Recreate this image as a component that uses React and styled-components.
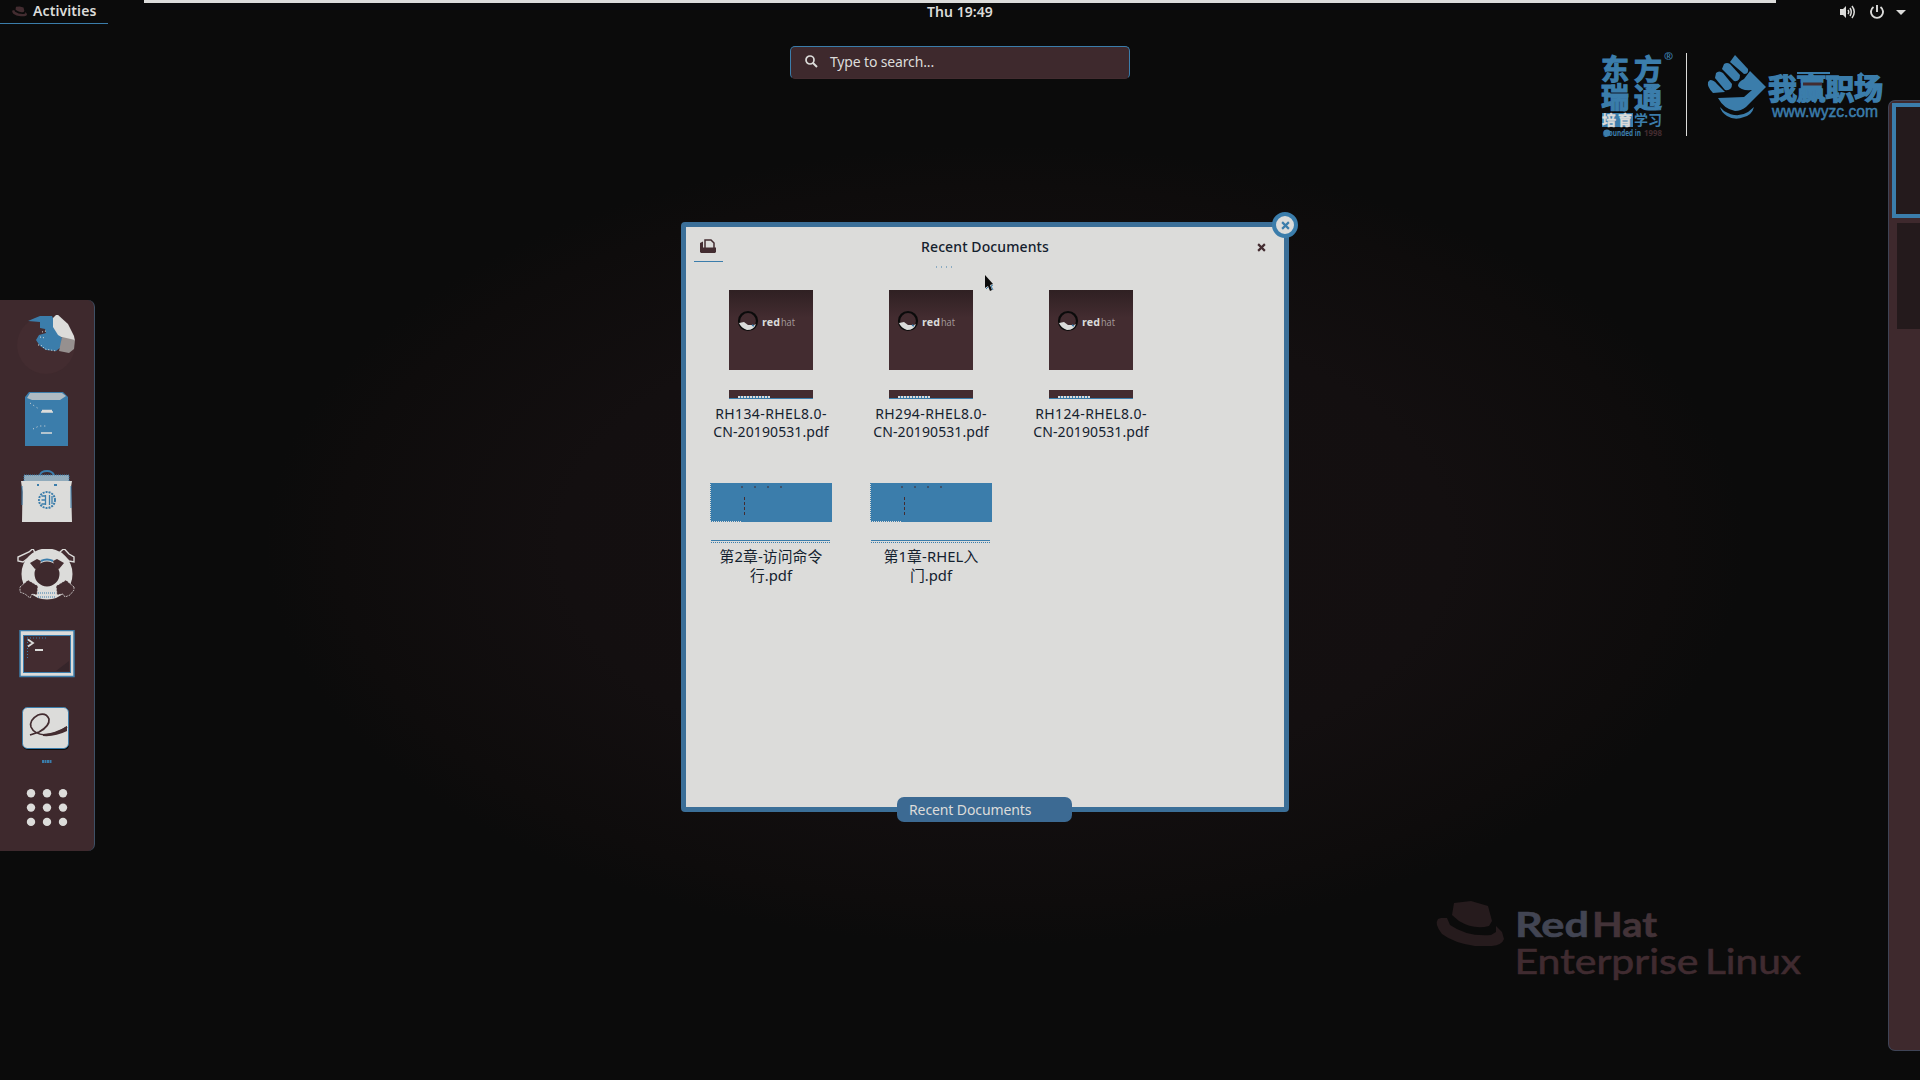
import React from "react";
import styled, { createGlobalStyle } from "styled-components";

const ink = "#0b0b0b";
const maroon = "#432c30";
const blue = "#3b7dab";
const paper = "#dcdcda";
const uiFont = '"Noto Sans", "Noto Sans CJK SC", sans-serif';

const Global = createGlobalStyle`
  html, body { margin: 0; background: ${ink}; overflow: hidden; }
  * { box-sizing: border-box; }
`;

const Desktop = styled.div`
  position: relative;
  width: 1920px;
  height: 1080px;
  overflow: hidden;
  display: flex;
  flex-direction: column;
  font-family: ${uiFont};
  color: ${paper};
  background: radial-gradient(ellipse 740px 400px at 1005px 545px, #161011 0%, #130f10 60%, #0e0c0c 90%, ${ink} 100%);
`;

const TopBar = styled.header`
  height: 24px;
  flex: none;
  display: grid;
  grid-template-columns: 1fr auto 1fr;
  align-items: center;
  font-size: 14px;
  font-weight: 600;
  line-height: 22px;
  background: linear-gradient(${paper}, ${paper}) 144px 0 / 1632px 3px no-repeat;
`;

const Activities = styled.div`
  width: 108px;
  height: 24px;
  padding: 0 0 1px 12px;
  display: flex;
  align-items: center;
  gap: 6px;
  border-bottom: 1px solid ${blue};
  letter-spacing: 0.1px;
`;

const Clock = styled.div`
  padding-bottom: 1px;
  letter-spacing: 0.05px;
`;

const Status = styled.div`
  display: flex;
  justify-content: flex-end;
  align-items: center;
  gap: 12px;
  padding-right: 14px;
`;

const Body = styled.div`
  flex: 1;
  display: grid;
  grid-template-columns: 1fr 340px 1fr;
  align-items: start;
`;

const Dock = styled.nav`
  width: 95px;
  height: 551px;
  margin-top: 276px;
  padding: 15px 0 0 15px;
  display: flex;
  flex-direction: column;
  background: #3e292d;
  border-right: 1px solid #3f5166;
  border-radius: 0 7px 7px 0;
`;

const DockItem = styled.div`
  width: 62px;
  height: ${(p) => p.$h}px;
  display: flex;
  svg { display: block; }
`;

const SearchBox = styled.div`
  width: 340px;
  height: 33px;
  margin-top: 22px;
  padding: 0 14px 2px;
  display: flex;
  align-items: center;
  gap: 12px;
  border: 1px solid ${maroon};
  border-top-color: ${blue};
  border-left-color: ${blue};
  border-right-color: ${blue};
  border-radius: 5px;
  background: #3e292d;
  font-size: 14px;
  line-height: 20px;
  letter-spacing: -0.15px;
`;

const Workspaces = styled.aside`
  justify-self: end;
  width: 32px;
  height: 951px;
  margin-top: 76px;
  padding: 2px 0 0 3px;
  display: flex;
  flex-direction: column;
  gap: 5px;
  border: 1px solid #3f4456;
  border-right: 0;
  border-radius: 7px 0 0 7px;
  background: #3e292d;
`;

const WorkspaceThumb = styled.div`
  height: ${(p) => (p.$active ? 115 : 106)}px;
  margin-left: ${(p) => (p.$active ? 0 : 5)}px;
  border: ${(p) => (p.$active ? `4px solid ${blue}` : "0")};
  border-right: 0;
  background: #241a1c;
`;

const Window = styled.section`
  position: absolute;
  left: 681px;
  top: 222px;
  width: 608px;
  height: 590px;
  border: 5px solid #3b6f98;
  border-radius: 4px;
  background: ${paper};
  color: #14212e;
`;

const TitleBar = styled.div`
  height: 40px;
  padding-bottom: 2px;
  display: grid;
  grid-template-columns: 45px 1fr 45px;
  align-items: center;
  font-size: 14px;
  font-weight: 500;
  letter-spacing: 0.1px;
  text-align: center;
`;

const Tab = styled.div`
  width: 29px;
  height: 35px;
  margin-left: 8px;
  align-self: start;
  display: flex;
  justify-content: center;
  padding: 12px 1px 0 0;
  border-bottom: 1px solid ${blue};
`;

const Grid = styled.div`
  padding: 23px 0 0 5px;
  display: grid;
  grid-template-columns: repeat(3, 160px);
  grid-template-rows: 192px 140px;
`;

const Card = styled.figure`
  margin: 0;
  display: flex;
  flex-direction: column;
  align-items: center;
  text-align: center;
`;

const Cover = styled.div`
  width: 84px;
  height: 80px;
  display: flex;
  padding: 20px 0 0 8px;
  background: linear-gradient(#2f2022, ${maroon} 28px);
`;

const CoverFoot = styled.div`
  width: 84px;
  height: 9px;
  margin: 20px 0 6px;
  padding: 6px 0 0 9px;
  background: ${maroon};
  border-bottom: 1px solid ${blue};
`;

const FootMark = styled.div`
  width: 32px;
  height: 2px;
  background: repeating-linear-gradient(90deg, ${paper} 0 2px, ${blue} 2px 3px);
`;

const Slide = styled.div`
  width: 122px;
  height: 39px;
  margin-top: 1px;
  background: ${blue};
  display: flex;
`;

const SlideRule = styled.div`
  width: 119px;
  height: 3px;
  margin: 18px 2px 4px 0;
  border-top: 1px solid ${blue};
  border-bottom: 1px dotted ${blue};
`;

const Name = styled.figcaption`
  display: flex;
  flex-direction: column;
  align-items: center;
  font-size: ${(p) => (p.$cjk ? 14.8 : 14)}px;
  line-height: ${(p) => (p.$cjk ? 19 : 18)}px;
`;

const NameLine = styled.span`
  letter-spacing: ${(p) => p.$track}px;
`;

const CloseBadge = styled.button`
  position: absolute;
  left: 586px;
  top: -15px;
  width: 26px;
  height: 26px;
  padding: 0;
  display: flex;
  align-items: center;
  justify-content: center;
  border: 4px solid ${blue};
  border-radius: 50%;
  background: ${paper};
`;

const Caption = styled.div`
  position: absolute;
  left: 211px;
  top: 570px;
  width: 175px;
  height: 25px;
  padding-left: 12px;
  border-radius: 7px;
  background: #3c6a93;
  color: ${paper};
  font-size: 14px;
  line-height: 25px;
  letter-spacing: -0.1px;
`;

const Pointer = styled.svg`
  position: absolute;
  left: 984px;
  top: 275px;
`;

const Dots = styled.svg`
  position: absolute;
  left: 250px;
  top: 39px;
`;

const Brand = styled.div`
  position: absolute;
  left: ${(p) => p.$x}px;
  top: ${(p) => p.$y}px;
  svg { display: block; overflow: visible; }
`;

const HatShape = ({ fill }) => (
  <g fill={fill}>
    <path d="M18 2 L35 0 L52 5 L56 20 L53 25 Q38 29 23 20 L16 14 Z" />
    <path d="M5 17 L11 17 L14 24 Q31 36 55 34 L60 31 L60 25 L66 31 L68 38 Q66 44 56 45 L39 45 Q18 42 6 33 Q-2 23 2 18 Z" />
  </g>
);

const Firefox = () => (
  <svg width="62" height="60" viewBox="0 0 62 60">
    <circle cx="31" cy="30" r="29" fill={maroon} />
    <path d="M13 6 L20 3 L25 1 H37 L40 8 L43 18 L47 23 L46 32 L41 36 L31 35 L25 31 L21 25 L24 20 L31 18 L30 14 L25 13 L25 7 Z" fill={blue} />
    <path d="M38 3 L42 -1 L53 9 L59 21 L60 26 L54 25 L48 23 L43 20 L38 12 Z" fill={paper} />
    <path d="M47 22 L60 25 L59 34 L54 38 L44 36 Z" fill="#96908f" />
    <path d="M23 30 l3 0 l4 4 l11 2 M25 22 l5 1 M27 17 l4 -1" stroke={paper} fill="none" strokeDasharray="1 2" />
  </svg>
);

const Files = () => (
  <svg width="62" height="60" viewBox="0 0 62 60">
    <path d="M14 0 H48 L53 5 V54 H10 V5 Z" fill={blue} />
    <path d="M15 1 H47 L51 4 L45 8 H17 L12 6 Z" fill="#aebbc3" />
    <path d="M26 20 H38 M27 18.500 H37 M26 41 H37" stroke={paper} strokeWidth="1.600" />
    <path d="M18 37 L24 34 L33 34 M15 11 L24 17" stroke={paper} strokeDasharray="1 3" fill="none" />
  </svg>
);

const Bag = () => (
  <svg width="62" height="60" viewBox="0 0 62 60">
    <path d="M25 5 Q26 1 32 1 Q37 1 39 5" stroke={blue} strokeWidth="2" fill="none" />
    <path d="M9 5 H54 V12 H9 Z" fill="#91abbb" stroke={blue} strokeDasharray="1 1" />
    <path d="M6 11 H57 L56 17 L57 52 H7 L7.500 22 Z" fill={paper} />
    <path d="M7 16 V35 M56 16 V38" stroke={blue} fill="none" />
    <rect x="22" y="14" width="2" height="2" fill={blue} />
    <rect x="39" y="14" width="3" height="2" fill={blue} />
    <circle cx="32" cy="30" r="8" fill="none" stroke={blue} strokeWidth="2" strokeDasharray="2 1" />
    <path d="M26.500 26 H31 M26.500 30 H31 M26.500 34 H31 M30.500 25 V35 M34.500 25 V35 M37 26 V34" stroke={blue} strokeWidth="1.300" />
  </svg>
);

const HelpRing = () => (
  <svg width="62" height="60" viewBox="0 0 62 60">
    <path d="M14 3 L18 -0.500 L20 4 L8 13 L3 12 L3 8 Z M45 3 L49 -0.500 L54 5 L59 8 L59 13 L54 12 Z" fill={maroon} stroke={paper} strokeWidth="1.400" />
    <circle cx="32" cy="25" r="19" fill="none" stroke={paper} strokeWidth="13" />
    <path d="M15 14 L22 10 L26 12 L24 19 L20 20 Z M49 14 L42 10 L38 12 L40 19 L44 20 Z" fill={maroon} />
    <path d="M5 38 L13 31 L23 37 L22 46 L17 45 L15 49 L10 45 L5 43 Z M59 38 L51 31 L41 37 L42 46 L48 45 L50 48 L55 46 L59 41 Z" fill={maroon} stroke={paper} strokeWidth="0.800" strokeDasharray="2 1" />
    <path d="M26 12 Q32 9 38 12" stroke={blue} strokeWidth="2" fill="none" />
    <path d="M23 44 H41 M23 48 H41" stroke={blue} strokeDasharray="1 1" />
  </svg>
);

const Terminal = () => (
  <svg width="62" height="60" viewBox="0 0 62 60">
    <rect x="5" y="0.500" width="54" height="46" fill={paper} stroke={blue} strokeWidth="1.500" />
    <rect x="8.500" y="5.500" width="47" height="37" fill={maroon} stroke={blue} />
    <path d="M41 41 L54 31 V41 Z" fill="#36252a" />
    <path d="M13 9.500 L18 13 L13 16.500 M20 20 H28" stroke={paper} strokeWidth="1.800" fill="none" />
    <path d="M12 8 H33 M12.500 9 V28" stroke={blue} strokeDasharray="1 2" fill="none" />
  </svg>
);

const Viewer = () => (
  <svg width="62" height="66" viewBox="0 0 62 66">
    <rect x="8" y="2" width="46" height="42" rx="5" fill={ink} />
    <rect x="7.500" y="1.500" width="46" height="41" rx="5" fill={paper} stroke={blue} />
    <path d="M15 29 L24 26 Q35 20 34 13 Q31 6 23 9 Q14 14 16 21 Q19 28 30 29 Q43 28 52 21" stroke={maroon} strokeWidth="1.700" fill="none" />
    <path d="M28 28 Q41 27 52 20 L52 25 Q40 31 28 30 Z" fill={maroon} />
    <path d="M27 55.500 H37" stroke={blue} strokeWidth="3" strokeDasharray="2 0.500" />
  </svg>
);

const AppsGrid = () => (
  <svg width="62" height="42" viewBox="0 0 62 42">
    {[0, 1, 2].map((r) =>
      [0, 1, 2].map((c) => <circle key={`${r}${c}`} cx={16 + c * 16} cy={7.300 + r * 14.300} r="4.200" fill={paper} />)
    )}
  </svg>
);

const apps = [
  [Firefox, 77],
  [Files, 78],
  [Bag, 79],
  [HelpRing, 81],
  [Terminal, 76],
  [Viewer, 80],
  [AppsGrid, 46],
];

const CoverLogo = () => (
  <svg width="70" height="22" viewBox="0 0 70 22">
    <circle cx="11" cy="11" r="9" fill={maroon} stroke={ink} strokeWidth="2.200" />
    <path d="M2 13 L7 12 L11 15 L17 15 L19 14 Q17 20 10 20 Q4 18 2 13 Z" fill={paper} />
    <path d="M15 15 l2 1" stroke={blue} strokeWidth="1.500" />
    <text x="25" y="15.500" fontFamily="Open Sans, sans-serif" fontWeight="700" fontSize="11" fill={paper} textLength="18" lengthAdjust="spacingAndGlyphs">red</text>
    <text x="44" y="15.500" fontFamily="Open Sans, sans-serif" fontSize="10.500" fill="#a59d9c" textLength="14" lengthAdjust="spacingAndGlyphs">hat</text>
  </svg>
);

const SlideMarks = () => (
  <svg width="122" height="39" viewBox="0 0 122 39">
    <path d="M31 4 H76" stroke={maroon} strokeDasharray="2 11" />
    <path d="M34.500 14 V33" stroke={maroon} strokeDasharray="3 2" />
    <path d="M0.500 1 V38 M0 38.500 H31" stroke={paper} strokeDasharray="1 1" fill="none" />
  </svg>
);

const books = [
  ["RH134-RHEL8.0-", "CN-20190531.pdf"],
  ["RH294-RHEL8.0-", "CN-20190531.pdf"],
  ["RH124-RHEL8.0-", "CN-20190531.pdf"],
];
const chapters = [
  ["第2章-访问命令", "行.pdf"],
  ["第1章-RHEL入", "门.pdf"],
];

const Cross = ({ size, color }) => (
  <svg width={size} height={size} viewBox="0 0 8 8">
    <path d="M1 1 L7 7 M7 1 L1 7" stroke={color} strokeWidth="1.900" />
  </svg>
);

const cjk = '"Noto Sans CJK SC", sans-serif';

const TrainingLogo = () => (
  <svg width="290" height="92" viewBox="1600 48 290 92">
    <g fill={blue} stroke={blue} strokeWidth="1.200" fontFamily={cjk} fontWeight="700">
      <text x="1601" y="80" fontSize="28" textLength="61">东方</text>
      <text x="1601" y="108" fontSize="28" textLength="61">瑞通</text>
    </g>
    <rect x="1602" y="113" width="31" height="14" fill={blue} />
    <g fontFamily={cjk} fontWeight="700" fontSize="14">
      <text x="1602" y="125" fill={paper} stroke={paper} strokeWidth="0.400" textLength="30">培育</text>
      <text x="1634" y="125" fill={blue} textLength="28">学习</text>
    </g>
    <circle cx="1607" cy="133" r="3.500" fill={blue} />
    <text x="1603" y="136" fontFamily="Open Sans, sans-serif" fontWeight="700" fontSize="8" fill={blue} textLength="38" lengthAdjust="spacingAndGlyphs">@ounded in</text>
    <text x="1644" y="136" fontFamily="Open Sans, sans-serif" fontWeight="700" fontSize="9" fill={maroon} textLength="18" lengthAdjust="spacingAndGlyphs">1998</text>
    <text x="1664" y="60" fontFamily="Open Sans, sans-serif" fontWeight="700" fontSize="11" fill={blue}>®</text>
    <path d="M1686.500 53 V136" stroke={paper} />
    <g fill={blue}>
      <path d="M1735 55 L1748 69 Q1749 74 1744 74 L1730 62 Z" />
      <path d="M1724 64 Q1727 62 1730 64 L1740 75 Q1740 82 1734 81 L1722 69 Z" />
      <path d="M1716 73 Q1719 70 1723 73 L1732 84 Q1732 91 1725 90 L1715 78 Z" />
      <path d="M1710 80 Q1714 80 1717 84 L1725 92 L1713 93 Q1707 87 1708 82 Z" />
      <path d="M1750 71 L1766 87 L1746 107 Q1741 111 1735 111 Q1724 109 1718 98 L1744 97 L1752 90 Q1741 91 1738 86 Q1738 82 1744 79 Z" />
      <path d="M1720 107 L1724 111 Q1737 119 1748 112 L1754 107 Q1752 115 1744 117 Q1735 121 1727 116 Q1721 112 1720 107 Z" />
    </g>
    <text x="1768" y="100" fontFamily={cjk} fontWeight="700" fontSize="29" fill={blue} stroke={blue} strokeWidth="1.400" textLength="115">我赢职场</text>
    <path d="M1797 73 H1830 M1830 77 H1852" stroke={blue} strokeWidth="2" />
    <path d="M1803 84 H1822" stroke={maroon} strokeWidth="3" />
    <path d="M1857 76 L1861 72 L1865 76 Z" fill={blue} />
    <text x="1772" y="117" fontFamily="Liberation Sans, sans-serif" fontSize="16" fill={blue} stroke={blue} strokeWidth="0.500" textLength="106" lengthAdjust="spacingAndGlyphs">www.wyzc.com</text>
  </svg>
);

const DistroLogo = () => (
  <svg width="370" height="90" viewBox="1436 901 370 90">
    <g transform="translate(1436 901)"><HatShape fill="#261b1d" /></g>
    <g fontFamily="Lato, sans-serif" fontWeight="700" fontSize="35" strokeWidth="0.600">
      <text x="1515" y="937" fill="#424553" stroke="#424553" textLength="74" lengthAdjust="spacingAndGlyphs">Red</text>
      <text x="1592" y="937" fill="#433338" stroke="#433338" textLength="65" lengthAdjust="spacingAndGlyphs">Hat</text>
    </g>
    <g fontFamily="Lato, sans-serif" fontSize="34" strokeWidth="0.600" fill="#402b30" stroke="#402b30">
      <text x="1514.500" y="973.500" textLength="184" lengthAdjust="spacingAndGlyphs">Enterprise</text>
      <text x="1705" y="973.500" textLength="96" lengthAdjust="spacingAndGlyphs">Linux</text>
    </g>
  </svg>
);

export default function App() {
  return (
    <Desktop>
      <Global />
      <TopBar>
        <Activities>
          <svg width="15" height="11" viewBox="0 0 68 46"><HatShape fill={maroon} /></svg>
          Activities
        </Activities>
        <Clock>Thu 19:49</Clock>
        <Status>
          <svg width="16" height="14" viewBox="0 0 16 14">
            <path d="M0 4 H3 L6 1 V13 L3 10 H0 Z" fill={paper} />
            <path d="M8 5 Q9.500 7 8 9 M10 3 Q12.500 7 10 11 M12 1 Q16.500 7 12 13" stroke={paper} strokeWidth="1.500" fill="none" />
          </svg>
          <svg width="16" height="14" viewBox="0 0 16 14">
            <path d="M5.500 2 A6 6 0 1 0 12.500 2 M9 0 V7" stroke={paper} strokeWidth="1.900" fill="none" />
          </svg>
          <svg width="10" height="5" viewBox="0 0 10 5"><path d="M0 0 H10 L5 5 Z" fill={paper} /></svg>
        </Status>
      </TopBar>
      <Body>
        <Dock>
          {apps.map(([Icon, h], i) => (
            <DockItem key={i} $h={h}><Icon /></DockItem>
          ))}
        </Dock>
        <SearchBox>
          <svg width="13" height="13" viewBox="0 0 13 13">
            <circle cx="5" cy="5" r="4" stroke={paper} strokeWidth="1.700" fill="none" />
            <path d="M8 8 L12 12" stroke={paper} strokeWidth="2" />
          </svg>
          Type to search...
        </SearchBox>
        <Workspaces>
          <WorkspaceThumb $active />
          <WorkspaceThumb />
        </Workspaces>
      </Body>
      <Window>
        <TitleBar>
          <Tab>
            <svg width="16" height="15" viewBox="0 0 16 15">
              <path d="M5 9 V1 H11 L14 4 V9" fill={paper} stroke={maroon} strokeWidth="1.500" />
              <path d="M0 4 L3 2.500 V8.500 H16 V13 L15 14 H1 L0 13 Z" fill={maroon} />
            </svg>
          </Tab>
          <span>Recent Documents</span>
          <span><Cross size={9} color={maroon} /></span>
        </TitleBar>
        <Dots width="18" height="2"><path d="M0 1 H17" stroke={blue} strokeDasharray="1 4" /></Dots>
        <Grid>
          {books.map(([a, b]) => (
            <Card key={a}>
              <Cover><CoverLogo /></Cover>
              <CoverFoot><FootMark /></CoverFoot>
              <Name>
                <NameLine $track={0.4}>{a}</NameLine>
                <NameLine $track={0.1}>{b}</NameLine>
              </Name>
            </Card>
          ))}
          {chapters.map(([a, b]) => (
            <Card key={a}>
              <Slide><SlideMarks /></Slide>
              <SlideRule />
              <Name $cjk>
                <NameLine $track={0.1}>{a}</NameLine>
                <NameLine $track={0}>{b}</NameLine>
              </Name>
            </Card>
          ))}
        </Grid>
        <CloseBadge><Cross size={9} color={blue} /></CloseBadge>
        <Caption>Recent Documents</Caption>
      </Window>
      <Pointer width="12" height="18" viewBox="0 0 12 18">
        <path d="M1 0 L9 9 L6 10 L8 15 L6 16 L4 11 L1 13 Z" fill={ink} />
        <path d="M2 14 L4 12 M9 10 L7 11 L9 15" stroke={blue} fill="none" />
      </Pointer>
      <Brand $x={1600} $y={48}><TrainingLogo /></Brand>
      <Brand $x={1436} $y={901}><DistroLogo /></Brand>
    </Desktop>
  );
}
